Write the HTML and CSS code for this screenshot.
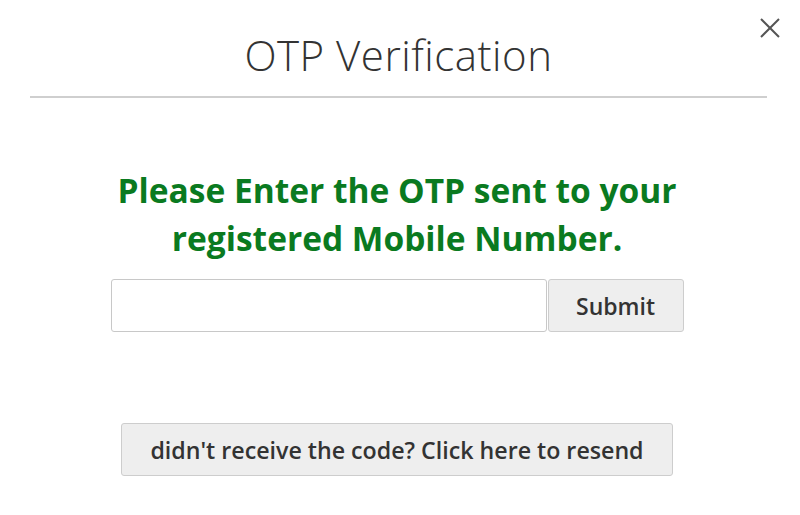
FILE: index.html
```html
<!DOCTYPE html>
<html>
<head>
<meta charset="utf-8">
<link rel="stylesheet" href="styles.css">
</head>
<body>
<div class="modal">
  <button class="close" aria-label="Close">
    <svg width="22" height="22" viewBox="0 0 22 22"><path d="M2 2L20 20M20 2L2 20" stroke="#555" stroke-width="2" fill="none"/></svg>
  </button>
  <header class="modal-header">
    <h1 class="title">OTP Verification</h1>
  </header>
  <div class="modal-body">
    <p class="prompt">Please Enter the OTP sent to your<br>registered Mobile Number.</p>
    <form class="otp-form">
      <input class="otp-input" type="text">
      <button class="btn btn-submit" type="button">Submit</button>
    </form>
    <button class="btn btn-resend" type="button">didn't receive the code? Click here to resend</button>
  </div>
</div>
</body>
</html>
```
FILE: styles.css
```css
html, body {
  margin: 0;
  padding: 0;
  background: #fff;
}
body {
  font-family: "Open Sans", "Noto Sans", sans-serif;
  color: #333;
}
.modal {
  position: relative;
  width: 800px;
  height: 515px;
  box-sizing: border-box;
  padding: 0 33px 0 30px;
}
.close {
  position: absolute;
  top: 17px;
  right: 19px;
  width: 22px;
  height: 22px;
  padding: 0;
  border: 0;
  background: none;
  display: flex;
}
.modal-header {
  border-bottom: 2px solid #cfcfcf;
  height: 98px;
  box-sizing: border-box;
  display: flex;
  justify-content: center;
}
.title {
  margin: 27px 0 0;
  font-size: 42px;
  font-weight: 300;
  letter-spacing: 0.5px;
  line-height: 56px;
  color: #333;
}
.modal-body {
  display: flex;
  flex-direction: column;
  align-items: center;
  padding-right: 3px;
}
.prompt {
  margin: 68px 0 0;
  text-align: center;
  font-size: 33.5px;
  font-weight: 700;
  line-height: 48px;
  color: #0a7a20;
}
.otp-form {
  display: flex;
  margin-top: 17px;
}
.otp-input {
  width: 436px;
  height: 53px;
  box-sizing: border-box;
  border: 1px solid #c8c8c8;
  border-radius: 3px;
  margin: 0;
}
.btn {
  font-family: "Open Sans", "Noto Sans", sans-serif;
  font-weight: 600;
  color: #333;
  background: #eeeeee;
  border: 1px solid #cdcdcd;
  border-radius: 3px;
  box-sizing: border-box;
}
.btn-submit {
  width: 136px;
  height: 53px;
  margin-left: 1px;
  font-size: 23px;
}
.btn-resend {
  margin-top: 91px;
  width: 552px;
  height: 53px;
  font-size: 23.2px;
}
```
